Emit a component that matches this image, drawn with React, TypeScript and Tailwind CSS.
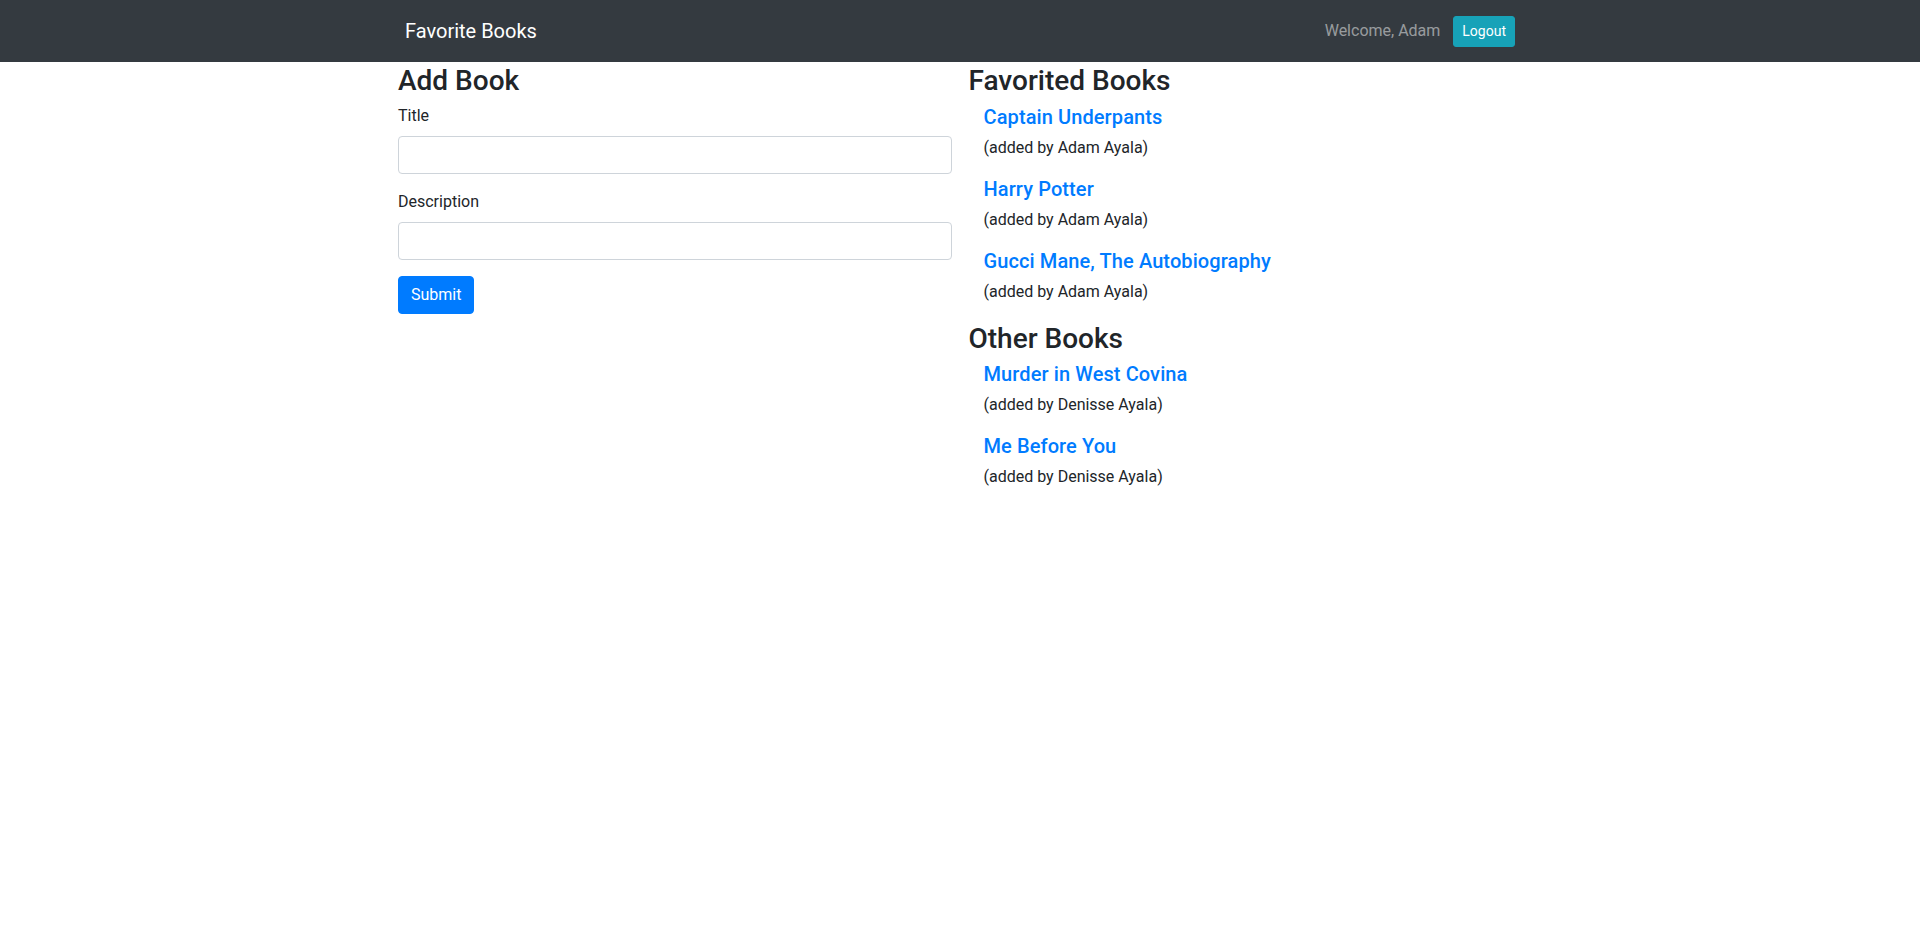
import React from "react";

const favorited = [
  { title: "Captain Underpants", by: "Adam Ayala" },
  { title: "Harry Potter", by: "Adam Ayala" },
  { title: "Gucci Mane, The Autobiography", by: "Adam Ayala" },
];

const others = [
  { title: "Murder in West Covina", by: "Denisse Ayala" },
  { title: "Me Before You", by: "Denisse Ayala" },
];

function BookItem({ title, by }: { title: string; by: string }) {
  return (
    <div className="pl-[15px]">
      <h5 className="text-[20px] leading-[1.2] font-medium pt-px mb-[7px]">
        <a href="#" className="text-[#007bff] tracking-[0.1px]">
          {title}
        </a>
      </h5>
      <p className="text-base leading-6 mb-4 text-[#212529]">(added by {by})</p>
    </div>
  );
}

export default function App() {
  return (
    <div className="min-h-[935px] bg-white font-['Roboto',sans-serif] text-[#212529]">
      <nav className="bg-[#343a40] h-[62px]">
        <div className="w-[1140px] mx-auto px-[15px] h-full flex items-center justify-between">
          <a href="#" className="text-white text-[20px] leading-[30px]">
            Favorite Books
          </a>
          <div className="flex items-center">
            <span className="text-[rgba(255,255,255,0.5)] text-base leading-6 mr-[13px]">
              Welcome, Adam
            </span>
            <button className="bg-[#17a2b8] text-white text-[14px] leading-[21px] px-2 py-1 h-[31px] rounded-[3px] border border-[#17a2b8]">
              Logout
            </button>
          </div>
        </div>
      </nav>
      <div className="w-[1124px] mx-auto grid grid-cols-2 gap-[17px]">
        <div>
          <h3 className="text-[28px] leading-[1.2] font-medium pt-[2px] mb-[6px]">Add Book</h3>
          <div className="mb-4">
            <label className="block text-base leading-6 mb-2">Title</label>
            <input
              type="text"
              className="block w-full h-[38px] border border-[#ced4da] rounded-[4px] px-3 text-base text-[#495057] outline-none"
            />
          </div>
          <div className="mb-4">
            <label className="block text-base leading-6 mb-2">Description</label>
            <input
              type="text"
              className="block w-full h-[38px] border border-[#ced4da] rounded-[4px] px-3 text-base text-[#495057] outline-none"
            />
          </div>
          <button className="bg-[#007bff] border border-[#007bff] text-white text-base leading-6 h-[38px] px-3 rounded-[4px]">
            Submit
          </button>
        </div>
        <div>
          <h3 className="text-[28px] leading-[1.2] font-medium pt-[2px] mb-[6px]">Favorited Books</h3>
          {favorited.map((b) => (
            <BookItem key={b.title} title={b.title} by={b.by} />
          ))}
          <h3 className="text-[28px] leading-[1.2] font-medium pt-[2px] mb-[6px]">Other Books</h3>
          {others.map((b) => (
            <BookItem key={b.title} title={b.title} by={b.by} />
          ))}
        </div>
      </div>
    </div>
  );
}
